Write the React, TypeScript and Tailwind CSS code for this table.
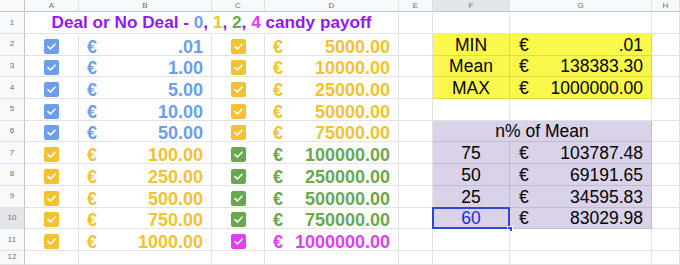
import React from "react";

const BLUE = "text-[#6d9eeb]";
const YEL = "text-[#f1c232]";
const GRN = "text-[#6aa84f]";
const MAG = "text-[#e03ff2]";

const bgFor: Record<string, string> = {
  [BLUE]: "bg-[#6d9eeb]",
  [YEL]: "bg-[#f1c232]",
  [GRN]: "bg-[#6aa84f]",
  [MAG]: "bg-[#e03ff2]",
};

type Row = {
  n: number;
  left: [string, string];
  right: [string, string];
  f?: string;
  g?: string;
  fill?: "yellow" | "lavender";
  selected?: boolean;
};

const rows: Row[] = [
  { n: 2, left: [".01", BLUE], right: ["5000.00", YEL], f: "MIN", g: ".01", fill: "yellow" },
  { n: 3, left: ["1.00", BLUE], right: ["10000.00", YEL], f: "Mean", g: "138383.30", fill: "yellow" },
  { n: 4, left: ["5.00", BLUE], right: ["25000.00", YEL], f: "MAX", g: "1000000.00", fill: "yellow" },
  { n: 5, left: ["10.00", BLUE], right: ["50000.00", YEL] },
  { n: 6, left: ["50.00", BLUE], right: ["75000.00", YEL], fill: "lavender" },
  { n: 7, left: ["100.00", YEL], right: ["100000.00", GRN], f: "75", g: "103787.48", fill: "lavender" },
  { n: 8, left: ["250.00", YEL], right: ["250000.00", GRN], f: "50", g: "69191.65", fill: "lavender" },
  { n: 9, left: ["500.00", YEL], right: ["500000.00", GRN], f: "25", g: "34595.83", fill: "lavender" },
  { n: 10, left: ["750.00", YEL], right: ["750000.00", GRN], f: "60", g: "83029.98", fill: "lavender", selected: true },
  { n: 11, left: ["1000.00", YEL], right: ["1000000.00", MAG] },
];

function Cell({ className = "", children }: { className?: string; children?: React.ReactNode }) {
  return <div className={`border-r border-b border-black/[0.11] min-w-0 ${className}`}>{children}</div>;
}

function RowHead({ n, active }: { n: number | string; active?: boolean }) {
  return (
    <div
      className={`flex items-center justify-center border-r border-r-[#c4c7c5] border-b border-b-[#e1e1e1] text-[8px] text-[#6f6f6f] ${
        active ? "bg-[#e3e5e8]" : "bg-[#f8f9fa]"
      }`}
    >
      {n}
    </div>
  );
}

function ColHead({ label, active }: { label: string; active?: boolean }) {
  return (
    <div
      className={`flex items-center justify-center border-b border-b-[#c4c7c5] border-r border-r-[#e1e1e1] text-[8px] text-[#6f6f6f] ${
        active ? "bg-[#e3e5e8]" : "bg-[#f8f9fa]"
      }`}
    >
      {label}
    </div>
  );
}

function Check({ color }: { color: string }) {
  return (
    <Cell className="flex items-end justify-center pb-[1px]">
      <span className={`flex h-[15px] w-[15px] items-center justify-center rounded-[2px] ${bgFor[color]}`}>
        <svg width="11" height="11" viewBox="0 0 11 11" fill="none">
          <path d="M2 5.6 L4.4 8 L9 3.2" stroke="white" strokeWidth="1.6" strokeLinecap="round" strokeLinejoin="round" />
        </svg>
      </span>
    </Cell>
  );
}

function Money({ value, color, bold = true, className = "" }: { value: string; color: string; bold?: boolean; className?: string }) {
  return (
    <Cell
      className={`flex items-end justify-between px-2 ${
        bold ? "font-bold text-[18px] leading-[15px] pb-0" : "text-[17.5px] leading-[17px] pb-[1px]"
      } ${color} ${className}`}
    >
      <span>€</span>
      <span>{value}</span>
    </Cell>
  );
}

export default function App() {
  const fillCls = (r: Row) =>
    r.fill === "yellow" ? "bg-[#fbf84c]" : r.fill === "lavender" ? "bg-[#d9d2e9]" : "bg-white";

  return (
    <div
      className="grid h-[265px] w-[680px] overflow-hidden bg-white grid-cols-[25px_54px_133px_53px_134px_34px_77px_142px_28px] grid-rows-[12px_22px_repeat(10,21.7px)_1fr]"
      style={{ fontFamily: '"Liberation Sans", Arial, sans-serif' }}
    >
      {/* header row */}
      <div className="border-r border-b border-[#c4c7c5] bg-[#f8f9fa]" />
      {["A", "B", "C", "D", "E", "F", "G", "H"].map((c) => (
        <ColHead key={c} label={c} active={c === "F"} />
      ))}

      {/* row 1 */}
      <RowHead n={1} />
      <Cell className="col-span-4 flex items-end justify-center pb-[3px] text-[17.2px] font-bold leading-[15px] text-[#9418f2]">
        <span>
          Deal or No Deal - <span className={BLUE}>0</span>, <span className={YEL}>1</span>,{" "}
          <span className={GRN}>2</span>, <span className={MAG}>4</span> candy payoff
        </span>
      </Cell>
      <Cell />
      <Cell />
      <Cell />
      <Cell />

      {rows.map((r) => (
        <React.Fragment key={r.n}>
          <RowHead n={r.n} active={r.selected} />
          <Check color={r.left[1]} />
          <Money value={r.left[0]} color={r.left[1]} />
          <Check color={r.right[1]} />
          <Money value={r.right[0]} color={r.right[1]} />
          <Cell />
          {r.n === 6 ? (
            <Cell className="col-span-2 flex items-end justify-center pb-[1px] text-[17.5px] leading-[17px] text-black bg-[#d9d2e9]">
              n% of Mean
            </Cell>
          ) : (
            <>
              <Cell
                className={`relative flex items-end justify-center pb-[1px] text-[17.5px] leading-[17px] ${fillCls(r)} ${
                  r.selected ? "text-[#1f2fd1]" : "text-black"
                }`}
              >
                {r.f}
                {r.selected && (
                  <>
                    <span className="pointer-events-none absolute -left-px -top-px -right-px -bottom-px border-2 border-[#2c48d8]" />
                    <span className="absolute -bottom-[4px] -right-[4px] h-[6px] w-[6px] border border-white bg-[#2c48d8]" />
                  </>
                )}
              </Cell>
              {r.g ? (
                <Money value={r.g} color="text-black" bold={false} className={`${fillCls(r)} pl-[9px]`} />
              ) : (
                <Cell />
              )}
            </>
          )}
          <Cell />
        </React.Fragment>
      ))}

      {/* row 12 */}
      <RowHead n={12} />
      <Cell />
      <Cell />
      <Cell />
      <Cell />
      <Cell />
      <Cell />
      <Cell />
      <Cell />
    </div>
  );
}
